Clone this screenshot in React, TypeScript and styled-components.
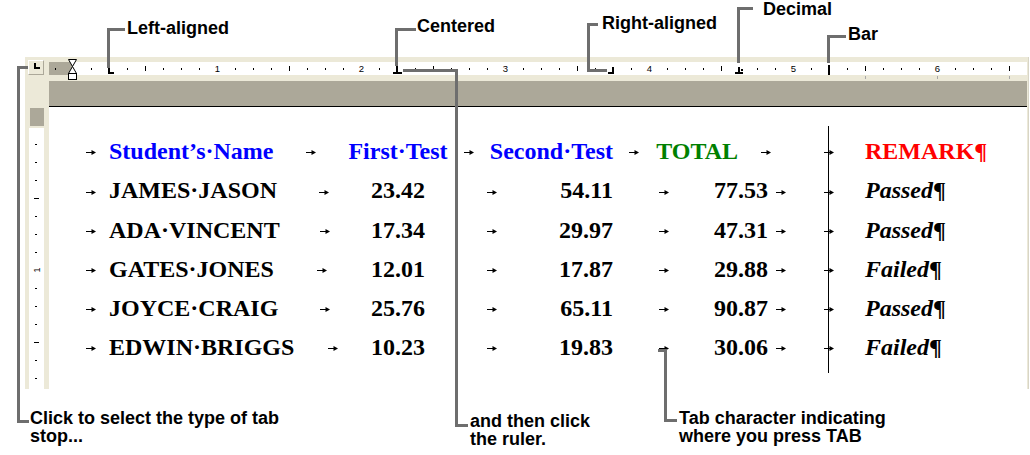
import styled, { createGlobalStyle } from "styled-components";

const GlobalStyle = createGlobalStyle`
  html, body {
    margin: 0;
    padding: 0;
    background: #fff;
  }
  body {
    width: 1030px;
    height: 455px;
    overflow: hidden;
  }
`;

const Page = styled.div`
  position: relative;
  box-sizing: border-box;
  width: 1030px;
  height: 455px;
  padding: 57px 0 0 25px;
  font-family: "Liberation Sans", Arial, sans-serif;
`;

const Window = styled.div`
  display: grid;
  grid-template-columns: 24px 978px;
  grid-template-rows: 24px 26px 282px;
  width: 1003px;
  background: #ece9d8;
  border-right: 1px solid #d8d5c6;
`;

const SelectorCell = styled.div`
  grid-row: 1;
  grid-column: 1;
  padding: 3px 0 0 3px;
`;

const TabSelector = styled.div`
  box-sizing: border-box;
  width: 16px;
  height: 15px;
  border: 1px solid;
  border-color: #fff #aca899 #aca899 #fff;
  background: #ece9d8;
  svg {
    display: block;
  }
`;

const RulerCell = styled.div`
  grid-row: 1;
  grid-column: 2;
  svg {
    display: block;
  }
`;

const Rail = styled.div`
  grid-row: 2 / span 2;
  grid-column: 1;
  svg {
    display: block;
  }
`;

const GrayBand = styled.div`
  grid-row: 2;
  grid-column: 2;
  box-sizing: border-box;
  background: #aca899;
  border-bottom: 1px solid #000;
`;

const Document = styled.div`
  grid-row: 3;
  grid-column: 2;
  position: relative;
  background: #fff;
  padding: 25.3px 0 0 24px;
`;

const Row = styled.div<{ $header?: boolean }>`
  display: grid;
  grid-template-columns: ${(p) =>
    p.$header
      ? "36px 239px 100px 41px 124px 41px 84px 55px 72px auto"
      : "36px 262px 54px 134px 54px 101px 54px 25px 72px auto"};
  height: 39.2px;
  font: bold 24px "Liberation Serif", "Times New Roman", serif;
  line-height: 39.2px;
  white-space: nowrap;
  color: #000;
`;

const Cell = styled.div<{ $align?: "start" | "center" | "end"; $color?: string }>`
  display: flex;
  justify-content: ${(p) =>
    p.$align === "center" ? "center" : p.$align === "end" ? "flex-end" : "flex-start"};
  color: ${(p) => p.$color ?? "#000"};
`;

const Lead = styled.div`
  display: flex;
`;

const Gap = styled.div<{ $grow?: boolean }>`
  display: flex;
  align-items: center;
  justify-content: center;
  flex: ${(p) => (p.$grow ? "1" : "none")};
  svg {
    display: block;
    margin-top: 2px;
  }
`;

const Remark = styled.span`
  font-style: italic;
`;

const Pilcrow = styled.span<{ $color?: string }>`
  font-style: normal;
  color: ${(p) => p.$color ?? "#000"};
`;

const BarRule = styled.div`
  position: absolute;
  left: 779px;
  top: 19px;
  width: 1px;
  height: 247px;
  background: #000;
`;

const Seg = styled.div<{ $x: number; $y: number; $w: number; $h: number }>`
  position: absolute;
  left: ${(p) => p.$x}px;
  top: ${(p) => p.$y}px;
  width: ${(p) => p.$w}px;
  height: ${(p) => p.$h}px;
  background: #6e6e6e;
`;

const Label = styled.div<{ $x: number; $y: number }>`
  position: absolute;
  left: ${(p) => p.$x}px;
  top: ${(p) => p.$y}px;
  font: bold 18px "Liberation Sans", Arial, sans-serif;
  line-height: 18px;
  color: #000;
  white-space: nowrap;
`;

type Callout = {
  segs: [number, number, number, number][];
  label: { x: number; y: number; lines: string[] };
};

const callouts: Callout[] = [
  {
    segs: [
      [107, 28, 3, 40],
      [107, 28, 18, 3],
    ],
    label: { x: 127, y: 18.8, lines: ["Left-aligned"] },
  },
  {
    segs: [
      [395, 28, 3, 38],
      [395, 28, 21, 3],
    ],
    label: { x: 417, y: 17.3, lines: ["Centered"] },
  },
  {
    segs: [
      [587, 23, 3, 49],
      [587, 23, 11, 3],
      [587, 69, 20, 3],
    ],
    label: { x: 602, y: 14.3, lines: ["Right-aligned"] },
  },
  {
    segs: [
      [737, 7, 3, 56],
      [737, 7, 16, 3],
    ],
    label: { x: 763, y: 0, lines: ["Decimal"] },
  },
  {
    segs: [
      [827, 35, 3, 28],
      [827, 35, 19, 3],
    ],
    label: { x: 848, y: 24.8, lines: ["Bar"] },
  },
  {
    segs: [
      [17, 66, 3, 357],
      [17, 66, 11, 3],
      [17, 420, 12, 3],
    ],
    label: { x: 30, y: 408.8, lines: ["Click to select the type of tab", "stop..."] },
  },
  {
    segs: [
      [403, 69, 55, 3],
      [455, 69, 3, 358],
      [455, 424, 13, 3],
    ],
    label: { x: 470, y: 411.8, lines: ["and then click", "the ruler."] },
  },
  {
    segs: [
      [658, 349, 9, 3],
      [664, 349, 3, 73],
      [664, 419, 13, 3],
    ],
    label: { x: 679, y: 408.8, lines: ["Tab character indicating", "where you press TAB"] },
  },
];

const students = [
  { name: "JAMES·JASON", first: "23.42", second: "54.11", total: "77.53", remark: "Passed" },
  { name: "ADA·VINCENT", first: "17.34", second: "29.97", total: "47.31", remark: "Passed" },
  { name: "GATES·JONES", first: "12.01", second: "17.87", total: "29.88", remark: "Failed" },
  { name: "JOYCE·CRAIG", first: "25.76", second: "65.11", total: "90.87", remark: "Passed" },
  { name: "EDWIN·BRIGGS", first: "10.23", second: "19.83", total: "30.06", remark: "Failed" },
];

function TabArrow() {
  return (
    <svg width="10" height="5" viewBox="0 0 10 5">
      <rect x="0" y="2" width="6" height="1" fill="#000" />
      <polygon points="5.5,0 10,2.5 5.5,5" fill="#000" />
    </svg>
  );
}

function Tab({ grow }: { grow?: boolean }) {
  return (
    <Gap $grow={grow}>
      <TabArrow />
    </Gap>
  );
}

function HorizontalRuler() {
  const ticks = Array.from({ length: 54 }, (_, k) => k - 1);
  return (
    <svg width="978" height="24" viewBox="0 0 978 24">
      <rect x="0" y="5" width="24" height="13" fill="#aca899" />
      <rect x="24" y="5" width="954" height="13" fill="#fff" />
      {ticks.map((i) => {
        const x = 24 + 18 * i;
        if (i === 0) return null;
        if (i > 0 && i % 8 === 0)
          return (
            <text
              key={i}
              x={x + 0.5}
              y="15"
              fontSize="9.5"
              fontFamily="Liberation Sans, Arial, sans-serif"
              textAnchor="middle"
              fill="#000"
            >
              {i / 8}
            </text>
          );
        if (i % 4 === 0) return <rect key={i} x={x} y="9" width="1" height="5" fill="#000" />;
        return <rect key={i} x={x} y="11" width="1" height="2" fill="#000" />;
      })}
      {/* default tab stops after the last set tab */}
      {[816, 888, 960].map((x) => (
        <rect key={x} x={x} y="19" width="1" height="3" fill="#a8a8a8" />
      ))}
      {/* indent markers */}
      <g fill="#fff" stroke="#000" strokeWidth="1">
        <polygon points="19.5,2.5 27.5,2.5 23.5,9.5" />
        <polygon points="23.5,9.5 19.5,16.5 27.5,16.5" />
        <rect x="19.5" y="16.5" width="8" height="6" />
      </g>
      {/* tab stops */}
      <g fill="#000">
        <rect x="59" y="10" width="2" height="7" />
        <rect x="59" y="15" width="6" height="2" />
        <rect x="344" y="15" width="9" height="2" />
        <rect x="347" y="9" width="2" height="6" />
        <rect x="563" y="10" width="2" height="7" />
        <rect x="559" y="15" width="6" height="2" />
        <rect x="686" y="15" width="8" height="2" />
        <rect x="689" y="10" width="2" height="5" />
        <rect x="692" y="12" width="2" height="2" />
        <rect x="779" y="8" width="2" height="10" />
      </g>
    </svg>
  );
}

function VerticalRuler() {
  const ticks = Array.from({ length: 14 }, (_, k) => k + 1);
  return (
    <svg width="24" height="308" viewBox="0 0 24 308">
      <rect x="5" y="27" width="14" height="18" fill="#aca899" />
      <rect x="4" y="47" width="15" height="261" fill="#fff" />
      {ticks.map((i) => {
        const y = 45 + 18 * i;
        if (i % 8 === 0)
          return (
            <text
              key={i}
              x="12"
              y={y + 3}
              fontSize="9"
              fontFamily="Liberation Sans, Arial, sans-serif"
              textAnchor="middle"
              fill="#000"
              transform={`rotate(-90 12 ${y})`}
            >
              {i / 8}
            </text>
          );
        if (i % 4 === 0) return <rect key={i} x="9" y={y} width="5" height="1" fill="#000" />;
        return <rect key={i} x="10" y={y} width="2" height="1" fill="#000" />;
      })}
    </svg>
  );
}

export default function App() {
  return (
    <Page>
      <GlobalStyle />
      <Window>
        <SelectorCell>
          <TabSelector>
            <svg width="14" height="13" viewBox="0 0 14 13">
              <rect x="5" y="2" width="2" height="6" fill="#000" />
              <rect x="5" y="6" width="6" height="2" fill="#000" />
            </svg>
          </TabSelector>
        </SelectorCell>
        <RulerCell>
          <HorizontalRuler />
        </RulerCell>
        <Rail>
          <VerticalRuler />
        </Rail>
        <GrayBand />
        <Document>
          <Row $header>
            <Tab />
            <Lead>
              <Cell $color="#0000ff">Student’s·Name</Cell>
              <Tab grow />
            </Lead>
            <Cell $align="center" $color="#0000ff">
              First·Test
            </Cell>
            <Tab />
            <Cell $align="end" $color="#0000ff">
              Second·Test
            </Cell>
            <Tab />
            <Cell $align="end" $color="#008000">
              TOTAL
            </Cell>
            <Tab />
            <Tab />
            <Cell $color="#ff0000">
              REMARK<Pilcrow $color="#ff0000">¶</Pilcrow>
            </Cell>
          </Row>
          {students.map((s) => (
            <Row key={s.name}>
              <Tab />
              <Lead>
                <Cell>{s.name}</Cell>
                <Tab grow />
              </Lead>
              <Cell $align="center">{s.first}</Cell>
              <Tab />
              <Cell $align="end">{s.second}</Cell>
              <Tab />
              <Cell $align="end">{s.total}</Cell>
              <Tab />
              <Tab />
              <Cell>
                <Remark>{s.remark}</Remark>
                <Pilcrow>¶</Pilcrow>
              </Cell>
            </Row>
          ))}
          <BarRule />
        </Document>
      </Window>
      {callouts.map((c, ci) => (
        <div key={ci}>
          {c.segs.map(([x, y, w, h], si) => (
            <Seg key={si} $x={x} $y={y} $w={w} $h={h} />
          ))}
          <Label $x={c.label.x} $y={c.label.y}>
            {c.label.lines.map((l) => (
              <div key={l}>{l}</div>
            ))}
          </Label>
        </div>
      ))}
    </Page>
  );
}
